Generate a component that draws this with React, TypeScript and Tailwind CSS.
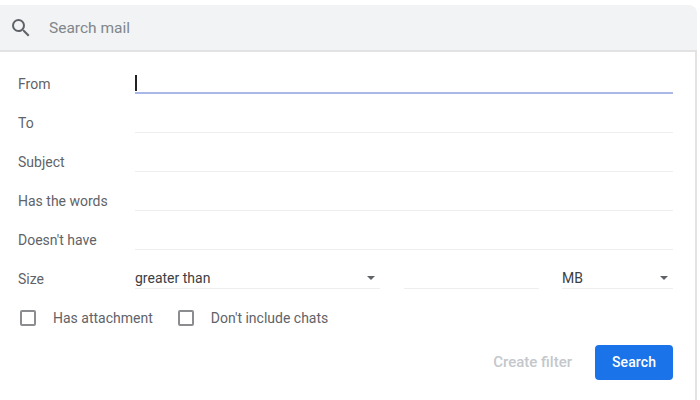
const rows = ["To", "Subject", "Has the words", "Doesn't have"];

const Caret = () => (
  <span className="mt-[9px] w-0 h-0 border-x-[4px] border-x-transparent border-t-[4px] border-t-[#5f6368]" />
);

const Check = ({ label }: { label: string }) => (
  <div className="flex items-center gap-[17px]">
    <span className="w-[16px] h-[16px] rounded-[2px] border-2 border-[#8a8c8f]" />
    <span>{label}</span>
  </div>
);

export default function App() {
  return (
    <div className="w-[700px] h-[400px] overflow-hidden bg-white pt-[5px] text-[14px] text-[#5f6368] font-['Roboto',sans-serif]">
      <div className="w-[697px] h-[45px] flex items-center pl-[9px] bg-[#f1f3f4] rounded-tr-[8px]">
        <svg width="24" height="24" viewBox="0 0 24 24" fill="#5f6368">
          <path d="M15.5 14h-.79l-.28-.27A6.471 6.471 0 0 0 16 9.5 6.5 6.5 0 1 0 9.5 16c1.61 0 3.09-.59 4.23-1.57l.27.28v.79l5 4.99L20.49 19l-4.99-5zm-6 0C7.01 14 5 11.99 5 9.5S7.01 5 9.5 5 14 7.01 14 9.5 11.99 14 9.5 14z" />
        </svg>
        <span className="ml-[16px] mt-[3px] text-[15.5px] text-[#80868b]">Search mail</span>
      </div>
      <div className="w-[697px] h-[350px] border-t-2 border-r-2 border-[#e3e3e3] pl-[18px] pr-[22px] pt-[20px]">
        <div className="flex h-[39px]">
          <span className="w-[117px] leading-[24px]">From</span>
          <div className="flex-1 h-[22px] border-b-2 border-[#a9b8e8]">
            <span className="block w-[1.5px] h-[16px] mt-[3px] bg-[#222]" />
          </div>
        </div>
        {rows.map((label) => (
          <div key={label} className="flex h-[39px]">
            <span className="w-[117px] leading-[24px]">{label}</span>
            <div className="flex-1 h-[22px] border-b border-[#eeeeee]" />
          </div>
        ))}
        <div className="flex h-[39px]">
          <span className="w-[117px] leading-[24px]">Size</span>
          <div className="w-[245px] h-[22px] flex items-start justify-between pr-[5px] border-b border-[#eeeeee] text-[#3c4043] leading-[22px]">
            <span>greater than</span>
            <Caret />
          </div>
          <div className="w-[135px] h-[22px] ml-[24px] border-b border-[#eeeeee]" />
          <div className="w-[111px] h-[22px] ml-[23px] flex items-start justify-between pr-[5px] border-b border-[#eeeeee] text-[#3c4043] leading-[22px]">
            <span>MB</span>
            <Caret />
          </div>
        </div>
        <div className="flex items-center gap-[25px] ml-[2px] h-[24px]">
          <Check label="Has attachment" />
          <Check label="Don't include chats" />
        </div>
        <div className="flex items-center justify-end mt-[15px]">
          <span className="font-medium text-[15px] text-[#c4c7cb]">Create filter</span>
          <button className="ml-[23px] w-[78px] h-[35px] rounded-[4px] bg-[#1a73e8] text-white font-medium tracking-[0.1px]">
            Search
          </button>
        </div>
      </div>
    </div>
  );
}
